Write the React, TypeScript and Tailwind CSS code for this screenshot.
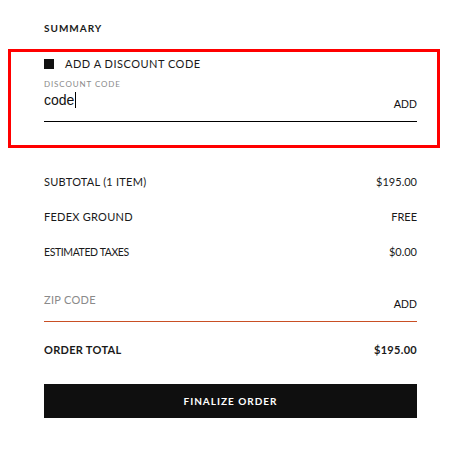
import React from "react";

const font = { fontFamily: "Lato, 'Liberation Sans', sans-serif" };
const arial = { fontFamily: "'Liberation Sans', Arial, sans-serif" };

function Row({ label, value, tight }: { label: string; value: string; tight?: boolean }) {
  return (
    <div className="flex h-[35px] items-center justify-between text-[11px] text-[#1a1a1a]">
      <span className={tight ? "text-[10.5px] tracking-[-0.4px]" : "tracking-[0.25px]"}>{label}</span>
      <span>{value}</span>
    </div>
  );
}

export default function App() {
  return (
    <div className="h-[459px] w-[470px] bg-white" style={font}>
      <div className="pl-[44px] pr-[53px] pt-[21px]">
        <div className="text-[10px] font-bold tracking-[1px] text-[#1a1a1a]">SUMMARY</div>

        {/* discount code box (highlighted) */}
        <div className="-ml-[36px] -mr-[23px] mt-[13px] h-[99px] border-[3px] border-[#ff0000] pl-[33px] pr-[20px] pt-[4px]">
          <div className="flex items-center gap-[11px]">
            <span className="h-[10px] w-[10px] bg-[#111]" />
            <span className="text-[11px] tracking-[0.5px] text-[#1a1a1a]">ADD A DISCOUNT CODE</span>
          </div>
          <div className="mt-[5px] text-[8px] tracking-[0.9px] text-[#8a8a8a]">DISCOUNT CODE</div>
          <div className="flex h-[32px] items-start justify-between border-b border-black">
            <span className="flex items-center text-[14px] text-[#111]" style={arial}>
              code<span className="ml-[1px] h-[16px] w-px bg-black" />
            </span>
            <span className="mt-[6px] text-[11px] text-[#111]" style={arial}>ADD</span>
          </div>
        </div>

        <div className="mt-[17px]">
          <Row label="SUBTOTAL (1 ITEM)" value="$195.00" />
          <Row label="FEDEX GROUND" value="FREE" />
          <Row label="ESTIMATED TAXES" value="$0.00" tight />
        </div>

        <div className="mt-[22px] flex h-[30px] items-start justify-between border-b border-[#c94f24]">
          <span className="text-[11px] tracking-[0.3px] text-[#8a8a8a]">ZIP CODE</span>
          <span className="mt-[4px] text-[11px] text-[#111]" style={arial}>ADD</span>
        </div>

        <div className="flex h-[57px] items-center justify-between text-[11px] font-bold tracking-[0.3px] text-[#1a1a1a]">
          <span>ORDER TOTAL</span>
          <span>$195.00</span>
        </div>

        <button className="mt-[5px] flex h-[34px] w-full items-center justify-center bg-[#0f0f0f] text-[10px] font-bold tracking-[1px] text-white">
          FINALIZE ORDER
        </button>
      </div>
    </div>
  );
}
